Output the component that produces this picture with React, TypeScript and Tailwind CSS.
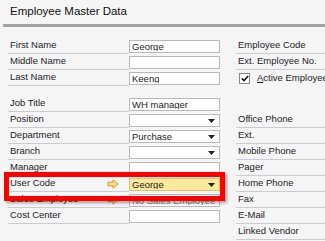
import React from 'react'

type Row = {
  label: string
  value?: string
  dropdown?: boolean
  highlight?: boolean
  link?: boolean
  muted?: boolean
}

const upper: Row[] = [
  { label: 'First Name', value: 'George' },
  { label: 'Middle Name', value: '' },
  { label: 'Last Name', value: 'Keeng' },
]

const lower: Row[] = [
  { label: 'Job Title', value: 'WH manager' },
  { label: 'Position', value: '', dropdown: true },
  { label: 'Department', value: 'Purchase', dropdown: true },
  { label: 'Branch', value: '', dropdown: true },
  { label: 'Manager', value: '' },
  { label: 'User Code', value: 'George', dropdown: true, highlight: true, link: true },
  { label: 'Sales Employee', value: 'No Sales Employee', link: true, muted: true },
  { label: 'Cost Center', value: '' },
]

const rightTop = ['Employee Code', 'Ext. Employee No.']
const rightBottom = ['Office Phone', 'Ext.', 'Mobile Phone', 'Pager', 'Home Phone', 'Fax', 'E-Mail', 'Linked Vendor']

function LinkArrow() {
  return (
    <svg width="12" height="10" viewBox="0 0 12 10" className="shrink-0">
      <path d="M1 3.2 H6 V0.8 L11 5 L6 9.2 V6.8 H1 Z" fill="#fbe07a" stroke="#c9a22a" strokeWidth="1" />
    </svg>
  )
}

function Caret() {
  return (
    <svg width="7" height="4" viewBox="0 0 7 4" className="shrink-0">
      <path d="M0 0 H7 L3.5 4 Z" fill="#222" />
    </svg>
  )
}

function FieldRow({ row }: { row: Row }) {
  return (
    <div className="flex h-[16px]">
      <div className="flex w-[121px] items-center justify-between border-b border-[#c9ccd3] pl-[2px] pr-[10px]">
        <span>{row.label}</span>
        {row.link && <LinkArrow />}
      </div>
      <div className="flex w-[91px] items-end pb-[1px]">
        <div
          className={
            'flex h-[13px] w-full items-center justify-between overflow-hidden border px-[2px] ' +
            (row.highlight
              ? 'border-[#d8c27a] bg-[#fde99a]'
              : 'border-[#b9b9b9] bg-white')
          }
        >
          <span className={'overflow-hidden whitespace-nowrap leading-none ' + (row.muted ? 'text-[#808080]' : '')}>{row.value}</span>
          {row.dropdown && <span className="pr-[2px]"><Caret /></span>}
        </div>
      </div>
    </div>
  )
}

function RightRow({ label }: { label: string }) {
  return (
    <div className="flex h-[16px] items-center border-b border-[#c9ccd3] pl-[2px] whitespace-nowrap">
      {label}
    </div>
  )
}

export default function App() {
  return (
    <div
      className="relative h-[241px] w-[325px] overflow-hidden bg-[#f5f5f5] text-[9.5px] text-[#1c1c28]"
      style={{ fontFamily: '"Liberation Sans", Arial, sans-serif' }}
    >
      {/* Title */}
      <div className="flex h-[24px] items-center pl-[10px] text-[11.5px] text-[#111]">
        Employee Master Data
      </div>
      <div className="ml-[3px] h-[3px] bg-[#a2a2a2]" />

      {/* Form */}
      <div className="flex gap-[16px] pl-[8px] pt-[11px]">
        <div className="flex flex-col">
          {upper.map(r => <FieldRow key={r.label} row={r} />)}
          <div className="h-[10px]" />
          {lower.map(r => <FieldRow key={r.label} row={r} />)}
        </div>

        <div className="flex flex-1 flex-col">
          {rightTop.map(l => <RightRow key={l} label={l} />)}
          <div className="flex h-[16px] items-center gap-[7px] pl-[3px] whitespace-nowrap">
            <span className="flex h-[11px] w-[11px] items-center justify-center border border-[#8a8a8a] bg-white">
              <svg width="8" height="7" viewBox="0 0 8 7">
                <path d="M0.8 3.4 L3 5.6 L7.2 1" fill="none" stroke="#111" strokeWidth="1.5" />
              </svg>
            </span>
            <span><span className="underline">A</span>ctive Employee</span>
          </div>
          <div className="h-[10px]" />
          <div className="h-[16px]" />
          {rightBottom.map(l => <RightRow key={l} label={l} />)}
        </div>
      </div>

      {/* Red highlight annotation */}
      <div className="absolute left-[4px] top-[172px] h-[29px] w-[221px] border-[5px] border-[#ff0000] shadow-[2px_2px_3px_rgba(0,0,0,0.35)]" />
    </div>
  )
}
